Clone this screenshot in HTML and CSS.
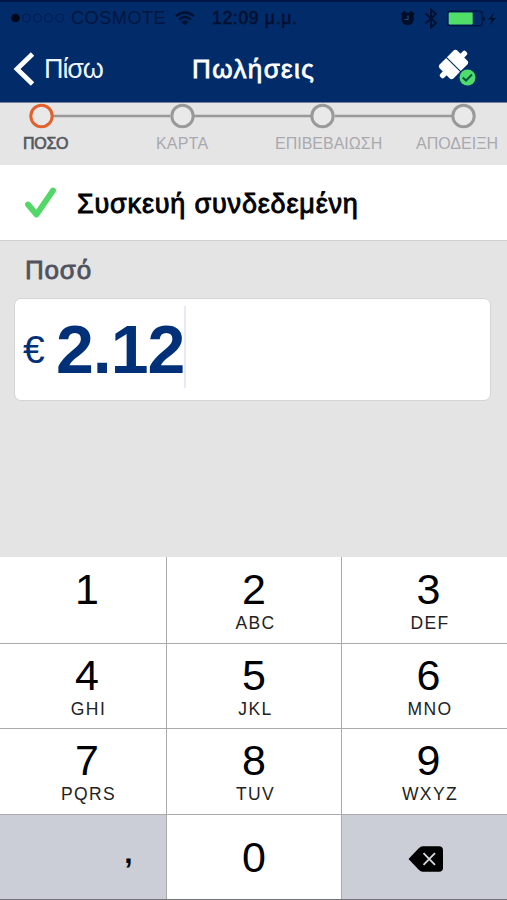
FILE: index.html
```
<!DOCTYPE html>
<html lang="el">
<head>
<meta charset="utf-8">
<title>Πωλήσεις</title>
<link rel="stylesheet" href="styles.css">
</head>
<body>
<header class="header">
  <div class="status">
    <svg class="signal" width="56" height="12" viewBox="0 0 56 12"><circle cx="5.5" cy="6" r="4.3" fill="#000818"/><g fill="none" stroke="#001c50" stroke-width="1"><circle cx="16.5" cy="6" r="4"/><circle cx="27.5" cy="6" r="4"/><circle cx="38.5" cy="6" r="4"/><circle cx="49.5" cy="6" r="4"/></g></svg>
    <span class="carrier">COSMOTE</span>
    <svg class="wifi" width="20" height="15" viewBox="0 0 20 15"><g fill="none" stroke="#00102f" stroke-width="2.4"><path d="M1 5.2Q10-2.4 19 5.2"/><path d="M4.2 8.5Q10 3.4 15.8 8.5"/></g><path d="M6.6 10.8Q10 7.8 13.4 10.8L10 14.5Z" fill="#00102f"/></svg>
    <span class="clock">12:09 μ.μ.</span>
    <svg class="devices" width="100" height="22" viewBox="0 0 100 22">
      <circle cx="8.700" cy="12" r="6.200" fill="#000d27"/><path d="M3.500 7.200l2-1.500M14 7.200l-2-1.500" stroke="#000d27" stroke-width="3" stroke-linecap="round"/><path d="M9 8.500v4H5.500" fill="none" stroke="#24477f" stroke-width="1.200"/>
      <path d="M26.500 6.500l10.500 9.500-5 4.500V2.500l5 4.500-10.500 9.500" fill="none" stroke="#00102f" stroke-width="1.800"/>
      <rect x="48.700" y="4.200" width="34.500" height="14.600" rx="2.500" fill="none" stroke="#001846" stroke-width="1.400"/><rect x="49.700" y="5.500" width="24" height="12" rx="1" fill="#50dd68"/><path d="M84.500 9q3 2.800 0 5.600z" fill="#001030"/><path d="M95 5.500l-6 7h4l-2.500 6 6.500-7.500h-4z" fill="#00102f"/>
    </svg>
  </div>
  <nav class="nav">
    <svg class="chevron" width="22" height="34" viewBox="0 0 22 34"><path d="M20.500 2L5 17 20.500 32" fill="none" stroke="#fff" stroke-width="4.800"/></svg>
    <span class="back">Πίσω</span>
    <h1 class="title">Πωλήσεις</h1>
    <svg class="plug" width="42" height="42" viewBox="0 0 42 42">
      <g transform="translate(16.500 17.500) rotate(45)" fill="#fff"><path d="M-9.800 -.5V-9.500q0-3 3-3H6.800q3 0 3 3v9z"/><path d="M-9.800 .6V9.500q0 3 3 3H6.800q3 0 3-3V.6z"/><rect x="-2.700" y="-18" width="5.400" height="8" rx="2"/><rect x="-2.700" y="10" width="5.400" height="8" rx="2"/></g>
      <circle cx="30.500" cy="30.500" r="8" fill="#4fdc6c"/><path d="M25.700 30.500l3.300 3 6-6" fill="none" stroke="#07563f" stroke-width="2"/>
    </svg>
  </nav>
</header>
<section class="steps">
  <svg class="track" width="507" height="26" viewBox="0 0 507 26"><path d="M53 13H170M194 13H311M335 13H452" stroke="#999" stroke-width="2.500"/><g fill="#e9e9e9" stroke="#999" stroke-width="3"><circle cx="41.500" cy="13" r="10.700" stroke="#e2622e"/><circle cx="182.500" cy="13" r="10.700"/><circle cx="322.500" cy="13" r="10.700"/><circle cx="463.500" cy="13" r="10.700"/></g></svg>
  <div class="labels"><span class="step current">ΠΟΣΟ</span><span class="step card">ΚΑΡΤΑ</span><span class="step confirm">ΕΠΙΒΕΒΑΙΩΣΗ</span><span class="step receipt">ΑΠΟΔΕΙΞΗ</span></div>
</section>
<section class="notice">
  <svg class="check" width="34" height="34" viewBox="0 0 34 34"><path d="M5 18.500L13.500 28.500 30 4.500" fill="none" stroke="#52d869" stroke-width="5.800" stroke-linecap="round" stroke-linejoin="round"/></svg>
  <span class="message">Συσκευή συνδεδεμένη</span>
</section>
<main class="form">
  <div class="label">Ποσό</div>
  <div class="field"><span class="currency">€</span><span class="amount">2.12</span><span class="caret"></span></div>
</main>
<section class="keypad">
  <div class="key side-left"><b>1</b></div><div class="key"><b>2</b><i>ABC</i></div><div class="key side-right"><b>3</b><i>DEF</i></div>
  <div class="key side-left"><b>4</b><i>GHI</i></div><div class="key"><b>5</b><i>JKL</i></div><div class="key side-right"><b>6</b><i>MNO</i></div>
  <div class="key side-left"><b>7</b><i>PQRS</i></div><div class="key"><b>8</b><i>TUV</i></div><div class="key side-right"><b>9</b><i>WXYZ</i></div>
  <div class="key grey comma">,</div><div class="key zero"><b>0</b></div><div class="key grey erase"><svg width="36" height="26" viewBox="0 0 36 26"><path d="M.5 13L10.500 2.500Q12.500 .3 15 .3H31Q35 .3 35 4.300V21.700Q35 25.700 31 25.700H15Q12.500 25.700 10.500 23.500Z" fill="#000"/><path d="M15.500 7.200L27 18.800M27 7.200L15.500 18.800" stroke="#d4d7dd" stroke-width="1.900"/></svg></div>
</section>
</body>
</html>
```
FILE: styles.css
```
* { box-sizing: border-box; }
body { margin: 0; width: 507px; height: 900px; overflow: hidden; background: #e4e4e5; font-family: "Liberation Sans", Arial, sans-serif; white-space: nowrap; }
svg { display: block; flex: none; }
.header { height: 103px; background: #012b69; border-top: 2px solid #001547; border-bottom: 1px solid #777f9c; }
.status { display: flex; align-items: center; height: 34px; padding: 0 8px 2px 10px; color: #00102f; }
.carrier { width: 96px; margin-left: 5px; font-size: 18px; letter-spacing: .6px; color: #001640; }
.wifi { margin-left: 8px; }
.clock { margin-left: 17px; font-size: 17.5px; letter-spacing: .7px; -webkit-text-stroke: .5px #00102f; }
.devices { margin-left: auto; }
.nav { display: flex; align-items: center; height: 64px; padding-left: 12px; color: #fff; }
.chevron { margin-top: 1px; }
.back { width: 147px; margin: 2px 0 0 10px; font-size: 27px; line-height: 32px; letter-spacing: -1.1px; color: #edf6ff; }
.title { width: 124px; margin: 1px 0 0 1px; font-size: 26px; line-height: 32px; font-weight: 400; letter-spacing: 1.4px; -webkit-text-stroke: .8px #fff; }
.plug { margin-left: 121px; }
.steps { height: 62px; background: #e5e5e6; }
.labels { display: flex; height: 30px; padding-left: 23px; font-size: 16px; line-height: 29px; color: #a9a9ad; }
.step { flex: none; }
.current { width: 133px; color: #555861; -webkit-text-stroke: .7px #555861; font-size: 16px; letter-spacing: -.3px; }
.card { width: 119px; letter-spacing: .2px; }
.confirm { width: 141px; }
.notice { display: flex; align-items: center; height: 75px; padding-left: 23px; background: #fff; }
.message { margin: 3px 0 0 20px; font-size: 27px; line-height: 32px; letter-spacing: .82px; -webkit-text-stroke: .9px #000; }
.form { height: 317px; padding: 13px 16px 0 14px; border-top: 1px solid #cfcfd1; }
.label { height: 44px; padding-left: 11px; font-size: 26px; line-height: 32px; letter-spacing: .8px; color: #505260; -webkit-text-stroke: .8px #505260; }
.field { display: flex; align-items: center; height: 103px; padding-left: 8px; background: #fff; border: 1px solid #d4d4d6; border-radius: 7px; color: #003078; }
.currency { width: 33px; font-size: 39px; line-height: 44px; }
.amount { font-size: 68px; line-height: 76px; font-weight: 700; letter-spacing: -1px; margin-top: -2px; }
.caret { width: 2px; height: 82px; margin-bottom: 6px; background: #e7e9f7; }
.keypad { display: grid; grid-template-columns: 166px 174px 165px; grid-template-rows: 86px 84px 85px 84px; gap: 1px; height: 343px; border-bottom: 1px solid #707278; background: #aaa; }
.key { display: flex; flex-direction: column; align-items: center; padding-top: 7px; background: #fff; color: #000; }
.side-left { padding-left: 8px; }
.side-right { padding-left: 8px; }
.key b { font-size: 43px; line-height: 48px; font-weight: 400; }
.key i { font-size: 17.5px; line-height: 20px; font-style: normal; letter-spacing: 1.4px; margin-right: -3px; color: #222; }
.key:nth-child(-n+3) { padding-top: 8px; }
.zero { padding-top: 18px; }
.grey { background: #cbced6; }
.comma { padding: 18px 0 0 91px; font-size: 30px; line-height: 40px; font-weight: 700; }
.erase { justify-content: center; padding: 4px 0 0 2px; }
```
